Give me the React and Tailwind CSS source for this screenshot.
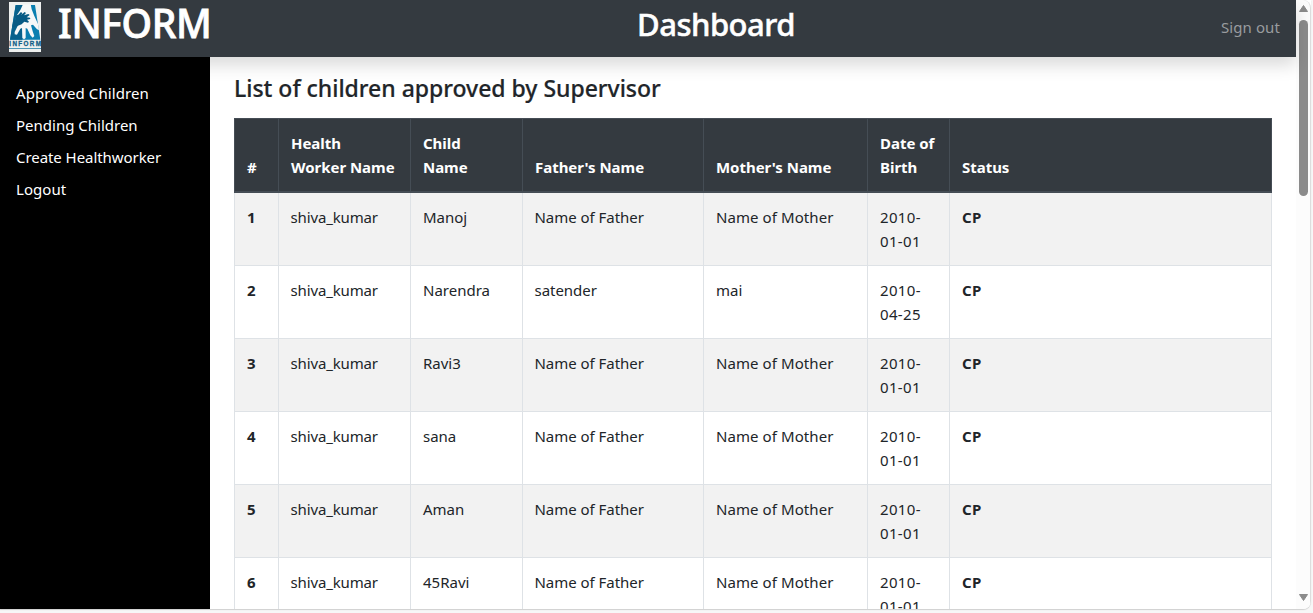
const rows = [
  ['1', 'shiva_kumar', 'Manoj', 'Name of Father', 'Name of Mother', '2010-', '01-01'],
  ['2', 'shiva_kumar', 'Narendra', 'satender', 'mai', '2010-', '04-25'],
  ['3', 'shiva_kumar', 'Ravi3', 'Name of Father', 'Name of Mother', '2010-', '01-01'],
  ['4', 'shiva_kumar', 'sana', 'Name of Father', 'Name of Mother', '2010-', '01-01'],
  ['5', 'shiva_kumar', 'Aman', 'Name of Father', 'Name of Mother', '2010-', '01-01'],
  ['6', 'shiva_kumar', '45Ravi', 'Name of Father', 'Name of Mother', '2010-', '01-01'],
];

const headers = [['#'], ['Health', 'Worker Name'], ['Child', 'Name'], ["Father's Name"], ["Mother's Name"], ['Date of', 'Birth'], ['Status']];

function Logo() {
  return (
    <svg viewBox="0 0 96 150" className="h-[50px] w-8 shrink-0">
      <rect width="96" height="150" fill="#eef0ef" />
      <path d="M20 9H78L94 113H3Z" fill="#0a7fb0" />
      <path d="M20 9H42L40 60L40 113H3Z" fill="#07618c" />
      <path d="M42 7H65L68 22L76 42L87 66L90 84L84 82L72 68L66 70L71 88L76 102L71 107L64 100L55 80L50 78L50 108L45 112L40 108L39 78L34 80L24 98L17 97L17 90L27 70L18 66L22 42L34 24Z" fill="#f6f8f8" />
      <path d="M21 40L28 38L36 30L40 34L36 39L47 30L51 33L45 40L58 36L62 39L53 46L63 47L64 51L54 53L60 59L57 62L46 59L38 67L27 71L16 76L10 74L13 60L19 52Z" fill="#075a84" />
      <text x="1" y="133" textLength="95" lengthAdjust="spacing" fill="#125f87" stroke="#125f87" strokeWidth="0.8" fontFamily="Liberation Sans, sans-serif" fontWeight="700" fontSize="19">INFORM</text>
      <rect x="0" y="138" width="96" height="3" fill="#4b96b5" />
    </svg>
  );
}

export default function App() {
  return (
    <div className="flex h-[613px] w-[1313px] flex-col overflow-hidden bg-[#f7f7f7] font-['Noto_Sans','Open_Sans',sans-serif] text-[15px] leading-6 text-[#212529]">
      <div className="flex h-[609px] w-[1311px] overflow-hidden rounded-br-[8px] bg-white shadow-[0_1px_1px_#cfcfcf]">
        <div className="flex w-[1296px] flex-col">
          <header className="relative grid h-[57px] shrink-0 grid-cols-[637px_1fr_auto] bg-[#343a40] text-white shadow-[0_8px_16px_rgba(0,0,0,0.15)]">
            <div className="flex pt-[2px] pl-[9px]">
              <Logo />
              <span className="-mt-[5px] ml-[17px] h-[54px] text-[39px] leading-[52px] font-medium tracking-[-0.4px] [-webkit-text-stroke:0.8px_white]">INFORM</span>
            </div>
            <h1 className="text-[31px] leading-[49px] font-medium tracking-[-0.5px] [-webkit-text-stroke:0.5px_white]">Dashboard</h1>
            <a className="pr-4 pt-[15px] leading-6 tracking-[0.1px] text-[#999c9f]">Sign out</a>
          </header>
          <div className="flex min-h-0 flex-1">
            <nav className="relative flex w-[210px] shrink-0 flex-col gap-2 bg-black pt-6 pl-4 text-white">
              <a className="tracking-[0.1px]">Approved Children</a>
              <a>Pending Children</a>
              <a className="tracking-[-0.06px]">Create Healthworker</a>
              <a className="tracking-[0.04px]">Logout</a>
            </nav>
            <main className="min-w-0 flex-1 overflow-hidden pt-4 pl-6">
              <h2 className="relative mb-[15px] text-[23px] leading-[30px] font-medium tracking-[-0.02px] [-webkit-text-stroke:0.2px_#212529]">List of children approved by Supervisor</h2>
              <table className="w-[1038px] table-fixed border-separate border-spacing-0">
                <colgroup>
                  <col className="w-[45px]" /><col className="w-[132px]" /><col className="w-[112px]" /><col className="w-[181px]" /><col className="w-[164px]" /><col className="w-[82px]" /><col className="w-[322px]" />
                </colgroup>
                <thead>
                  <tr className="h-[75px] bg-[#343a40] text-white">
                    {headers.map((lines, i) => (
                      <th key={i} className="border-t border-r border-b-2 border-[#454d55] p-3 pr-0 pb-3 text-left align-bottom font-bold tracking-[-0.03px] whitespace-nowrap first:border-l">
                        {lines.map((line) => <div key={line}>{line}</div>)}
                      </th>
                    ))}
                  </tr>
                </thead>
                <tbody>
                  {rows.map((r) => (
                    <tr key={r[0]} className="h-[73px] odd:bg-[#f2f2f2]">
                      <td className="border-r border-b border-l border-[#dee2e6] py-3 pl-3 align-top font-bold">{r[0]}</td>
                      <td className="border-r border-b border-[#dee2e6] py-3 pl-[11.5px] align-top tracking-[-0.14px]">{r[1]}</td>
                      <td className="border-r border-b border-[#dee2e6] py-3 pl-3 align-top">{r[2]}</td>
                      <td className="border-r border-b border-[#dee2e6] py-3 pl-[11.5px] align-top tracking-[-0.03px]">{r[3]}</td>
                      <td className="border-r border-b border-[#dee2e6] py-3 pl-3 align-top tracking-[0.08px]">{r[4]}</td>
                      <td className="border-r border-b border-[#dee2e6] py-3 pl-3 align-top tracking-[0.35px]"><div>{r[5]}</div><div>{r[6]}</div></td>
                      <td className="border-r border-b border-[#dee2e6] py-3 pl-3 align-top font-bold tracking-[0.4px]">CP</td>
                    </tr>
                  ))}
                </tbody>
              </table>
            </main>
          </div>
        </div>
        <div className="flex w-[15px] flex-col items-center rounded-tr-[8px] border-r border-[#dddddd] bg-[#fcfcfc] pt-[5px] pb-[8px]">
          <svg viewBox="0 0 9 7" className="h-[7px] w-[9px]"><path d="M4.5 .5L8.5 6.5H.5Z" fill="#8b8b8b" stroke="#8b8b8b" strokeLinejoin="round" /></svg>
          <div className="mt-2 h-[176px] w-[9px] rounded-full bg-[#8b8b8b]" />
          <svg viewBox="0 0 9 7" className="mt-auto h-[7px] w-[9px]"><path d="M4.5 6.5L8.5 .5H.5Z" fill="#8b8b8b" stroke="#8b8b8b" strokeLinejoin="round" /></svg>
        </div>
      </div>
    </div>
  );
}
